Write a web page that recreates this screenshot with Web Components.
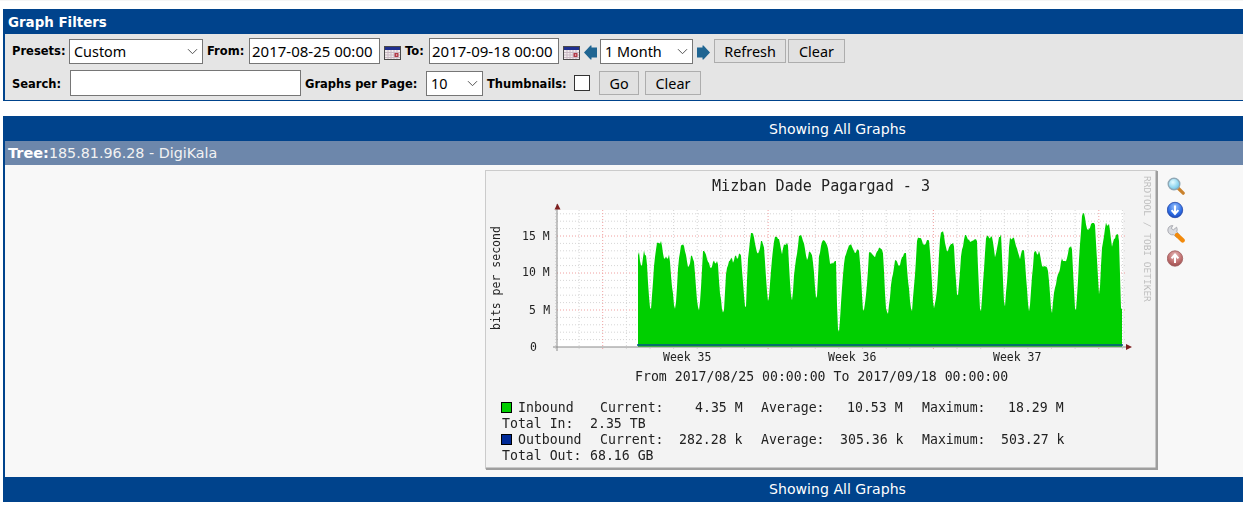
<!DOCTYPE html>
<html>
<head>
<meta charset="utf-8">
<title>Graphs</title>
<style>
  html, body { margin: 0; background: #fff; }
  #top-line { height: 1px; background: #f5f5f5; }
  #page { width: 1240px; margin: 8px 0 0 3px; display: flex; flex-direction: column; gap: 15px; }
  #graphs { background: #00438c; }
</style>
</head>
<body>
<div id="top-line"></div>
<div id="page">
  <filter-panel heading="Graph Filters">
    <filter-row>
      <filter-label style="width:57px">Presets:</filter-label>
      <filter-select value="Custom" width="134"></filter-select>
      <filter-label style="margin-left:4px;width:42px">From:</filter-label>
      <filter-input value="2017-08-25 00:00" width="131"></filter-input>
      <cal-icon style="margin-left:4px"></cal-icon>
      <filter-label style="margin-left:4px;width:24px">To:</filter-label>
      <filter-input value="2017-09-18 00:00" width="130"></filter-input>
      <cal-icon style="margin-left:4px"></cal-icon>
      <step-arrow dir="left" style="margin-left:4px"></step-arrow>
      <filter-select value="1 Month" width="93" style="margin-left:3px"></filter-select>
      <step-arrow dir="right" style="margin-left:4px"></step-arrow>
      <filter-button width="72" style="margin-left:4px">Refresh</filter-button>
      <filter-button width="57" style="margin-left:2px">Clear</filter-button>
    </filter-row>
    <filter-row style="margin-top:6px">
      <filter-label style="width:58px;margin-top:2px">Search:</filter-label>
      <filter-input width="231" height="26"></filter-input>
      <filter-label style="margin-left:4px;width:121px;margin-top:2px">Graphs per Page:</filter-label>
      <filter-select value="10" width="57"></filter-select>
      <filter-label style="margin-left:4px;width:87px;margin-top:2px">Thumbnails:</filter-label>
      <filter-check></filter-check>
      <filter-button width="40" style="margin-left:9px">Go</filter-button>
      <filter-button width="56" style="margin-left:6px">Clear</filter-button>
    </filter-row>
  </filter-panel>

  <div id="graphs">
    <blue-bar>Showing All Graphs</blue-bar>
    <tree-row label="Tree:">185.81.96.28 - DigiKala</tree-row>
    <graph-cell>
      <rrd-graph></rrd-graph>
      <graph-actions></graph-actions>
    </graph-cell>
    <blue-bar style="line-height:25px">Showing All Graphs</blue-bar>
  </div>
</div>

<script>
// Filter box at the top
class FilterPanel extends HTMLElement {
  constructor() {
    super();
    const shadow = this.attachShadow({ mode: "open" });
    shadow.innerHTML = `
      <style>
        :host { display: block; background: #00438c; padding-bottom: 1px; }
        h2 {
          margin: 0; height: 25px; padding-left: 5px;
          font: bold 13.4px/28px "DejaVu Sans", sans-serif; color: #fff;
        }
        #body {
          margin-left: 2px; height: 62px; padding: 4px 0 0 7px;
          background: #e5e5e5; display: flex; flex-direction: column;
        }
      </style>
      <h2>${this.getAttribute("heading")}</h2>
      <div id="body"><slot></slot></div>
    `;
  }
}

class FilterRow extends HTMLElement {
  constructor() {
    super();
    this.attachShadow({ mode: "open" }).innerHTML = `
      <style>:host { display: flex; align-items: center; height: 26px; }</style>
      <slot></slot>
    `;
  }
}

class FilterLabel extends HTMLElement {
  constructor() {
    super();
    this.attachShadow({ mode: "open" }).innerHTML = `
      <style>
        :host {
          display: block; flex: none; white-space: nowrap;
          font: bold 11.5px "DejaVu Sans", sans-serif; color: #000;
        }
      </style>
      <slot></slot>
    `;
  }
}

class FilterInput extends HTMLElement {
  constructor() {
    super();
    const w = this.getAttribute("width");
    const h = this.getAttribute("height") || 26;
    this.attachShadow({ mode: "open" }).innerHTML = `
      <style>
        :host { display: block; flex: none; }
        input {
          display: block; box-sizing: border-box; width: ${w}px; height: ${h}px;
          margin: 0; padding: 0 2px; border: 1px solid #767676; border-radius: 0;
          background: #fff; outline: none;
          font: 15px "Noto Sans", sans-serif; color: #000;
        }
      </style>
      <input type="text" value="${this.getAttribute("value") || ""}">
    `;
  }
}

class FilterSelect extends HTMLElement {
  constructor() {
    super();
    const w = this.getAttribute("width");
    const value = this.getAttribute("value");
    this.attachShadow({ mode: "open" }).innerHTML = `
      <style>
        :host { display: block; flex: none; position: relative; width: ${w}px; height: 25px; }
        select {
          display: block; box-sizing: border-box; width: 100%; height: 100%;
          margin: 0; padding: 0 0 0 4px; appearance: none; border: 1px solid #767676;
          border-radius: 0; background: #fff; outline: none;
          font: 14.4px "Noto Sans", sans-serif; color: #000;
        }
        svg { position: absolute; right: 5px; top: 9px; pointer-events: none; }
      </style>
      <select><option>${value}</option></select>
      <svg width="11" height="7" viewBox="0 0 11 7"><path d="M1 1.2 5.5 5.7 10 1.2" fill="none" stroke="#555" stroke-width="1"/></svg>
    `;
  }
}

class FilterButton extends HTMLElement {
  constructor() {
    super();
    const w = this.getAttribute("width");
    this.attachShadow({ mode: "open" }).innerHTML = `
      <style>
        :host { display: block; flex: none; }
        button {
          display: block; box-sizing: border-box; width: ${w}px; height: 24px;
          margin: 0; padding: 0; border: 1px solid #adadad; border-radius: 0;
          background: #e1e1e1; font: 14.4px "Noto Sans", sans-serif; color: #000;
        }
      </style>
      <button><slot></slot></button>
    `;
  }
}

class FilterCheck extends HTMLElement {
  constructor() {
    super();
    this.attachShadow({ mode: "open" }).innerHTML = `
      <style>
        :host { display: block; flex: none; }
        input {
          display: block; appearance: none; box-sizing: border-box; width: 16px; height: 16px;
          margin: 0; border: 1px solid #333; background: #fff; border-radius: 0;
        }
      </style>
      <input type="checkbox">
    `;
  }
}

class CalIcon extends HTMLElement {
  constructor() {
    super();
    this.attachShadow({ mode: "open" }).innerHTML = `
      <style>:host { display: block; flex: none; height: 14px; margin-top: 4px; } svg { display: block; }</style>
      <svg width="17" height="14" viewBox="0 0 17 14">
        <rect x=".5" y=".5" width="16" height="13" fill="#f1ecec" stroke="#4a4a4a"/>
        <rect x="1" y="1" width="15" height="3" fill="#1f2f8f"/>
        <path d="M1 6.5H16M1 9H16M1 11.5H16M4 4V13M7 4V13M10 4V13M13 4V13" stroke="#c9b9c4" stroke-width="1" fill="none"/>
        <rect x="10.5" y="7" width="4" height="4" fill="#b23a48"/>
        <rect x="12" y="8.4" width="1.2" height="1.2" fill="#f4d9d9"/>
      </svg>
    `;
  }
}

class StepArrow extends HTMLElement {
  constructor() {
    super();
    const flip = this.getAttribute("dir") === "right" ? ' transform="matrix(-1 0 0 1 13 0)"' : "";
    this.attachShadow({ mode: "open" }).innerHTML = `
      <style>:host { display: block; flex: none; height: 15px; margin-top: 2px; } svg { display: block; }</style>
      <svg width="13" height="15" viewBox="0 0 13 15">
        <path d="M0 7.5 6.5 .5 7.5 .5V2.5H13V12.5H7.5V14.5H6.5Z" fill="#1f6592"${flip}/>
      </svg>
    `;
  }
}

class BlueBar extends HTMLElement {
  constructor() {
    super();
    this.attachShadow({ mode: "open" }).innerHTML = `
      <style>
        :host {
          display: block; height: 25px; box-sizing: border-box; padding-left: 429px;
          background: #00438c; color: #fff; text-align: center;
          font: 14.1px/26px "DejaVu Sans", sans-serif;
        }
      </style>
      <slot></slot>
    `;
  }
}

class TreeRow extends HTMLElement {
  constructor() {
    super();
    this.attachShadow({ mode: "open" }).innerHTML = `
      <style>
        :host {
          display: block; height: 24px; margin-left: 2px; padding-left: 3px;
          background: #6d87ab; color: #f2f2f2;
          font: 14.3px/25px "DejaVu Sans", sans-serif;
        }
        b { color: #fff; font-size: 14.5px; }
      </style>
      <b>${this.getAttribute("label")}</b><slot></slot>
    `;
  }
}

class GraphCell extends HTMLElement {
  constructor() {
    super();
    this.attachShadow({ mode: "open" }).innerHTML = `
      <style>
        :host {
          display: flex; align-items: flex-start;
          margin-left: 2px; height: 312px; box-sizing: border-box; padding: 5px 0 0 480px;
          background: #f8f8f8;
        }
      </style>
      <slot></slot>
    `;
  }
}

class GraphActions extends HTMLElement {
  constructor() {
    super();
    this.attachShadow({ mode: "open" }).innerHTML = `
      <style>
        :host { display: flex; flex-direction: column; gap: 6px; width: 24px; padding: 7px 0 0 9px; }
        svg { display: block; }
      </style>
      <svg width="18" height="18" viewBox="0 0 18 18">
        <defs><radialGradient id="lens" cx=".4" cy=".35" r=".7"><stop offset="0" stop-color="#e6fbff"/><stop offset="1" stop-color="#62c2e8"/></radialGradient></defs>
        <path d="M11 11 16.2 16.2" stroke="#c9822e" stroke-width="3.2" stroke-linecap="round"/>
        <circle cx="7" cy="7" r="5.8" fill="url(#lens)" stroke="#8fa7b5" stroke-width="1.4"/>
      </svg>
      <svg width="18" height="18" viewBox="0 0 18 18">
        <defs><radialGradient id="blue" cx=".5" cy=".3" r=".75"><stop offset="0" stop-color="#9cc4fb"/><stop offset=".6" stop-color="#2f6fe6"/><stop offset="1" stop-color="#1842b4"/></radialGradient></defs>
        <circle cx="8" cy="9" r="7.7" fill="url(#blue)" stroke="#2346a6" stroke-width=".8"/>
        <path d="M8 4.5V12.5M4.6 9.2 8 13 11.4 9.2" fill="none" stroke="#fff" stroke-width="2"/>
      </svg>
      <svg width="18" height="18" viewBox="0 0 18 18">
        <path d="M5.8 .6A5 5 0 0 0 .8 5 4.8 4.8 0 0 0 6.6 9.8L9.6 12.4 12.2 9.8 9.8 6.6A5 5 0 0 0 9.6 2.2L6.4 4.8 4.2 3.4Z" fill="#d9dbe0" stroke="#9a9ca3" stroke-width=".8"/>
        <path d="M10 10 15.6 15.4" stroke="#f28a0c" stroke-width="4.4" stroke-linecap="round"/>
      </svg>
      <svg width="18" height="18" viewBox="0 0 18 18">
        <defs><radialGradient id="red" cx=".5" cy=".3" r=".75"><stop offset="0" stop-color="#e6bcbc"/><stop offset=".6" stop-color="#bf6e6e"/><stop offset="1" stop-color="#964a4a"/></radialGradient></defs>
        <circle cx="8" cy="9.5" r="7.7" fill="url(#red)" stroke="#a06060" stroke-width=".8"/>
        <path d="M8 14V6M4.6 9.3 8 5.5 11.4 9.3" fill="none" stroke="#fff" stroke-width="2"/>
      </svg>
    `;
  }
}

// Traffic outline read off the picture, two stretches with their own offsets
const STRETCH_A = [470,546, 472,245, 478,300, 490,300, 496,258, 500,340, 508,440, 514,455, 520,385, 526,290, 534,230, 540,235, 552,295, 565,270, 572,355, 580,430, 585,455, 592,400, 598,290, 606,243, 614,258, 622,320, 638,275, 645,370, 652,435, 658,452, 664,405, 672,262, 680,280, 690,320, 710,285, 716,370, 722,430, 728,452, 735,435, 742,310, 752,282, 760,305, 768,275, 780,270, 788,390, 795,440, 800,452, 806,290, 815,205, 822,232, 832,280, 848,230, 855,340, 865,440, 870,400, 878,290, 888,212, 895,225, 905,285, 920,225, 930,400, 938,440, 945,330, 960,213, 970,240, 978,290, 992,260, 1000,340, 1010,445, 1015,380];
const STRETCH_B = [0,270, 12,227, 20,240, 30,315, 45,290, 50,490, 60,515, 68,380, 78,270, 90,240, 100,268, 115,252, 125,435, 132,452, 140,405, 150,265, 165,285, 175,250, 185,255, 195,430, 205,465, 215,375, 228,285, 238,315, 255,265, 268,425, 278,452, 285,370, 295,212, 310,250, 325,222, 335,400, 342,452, 352,395, 365,198, 380,265, 398,235, 405,340, 412,455, 425,290, 437,208, 450,240, 468,222, 476,430, 485,452, 495,320, 500,212, 515,225, 525,295, 540,215, 550,430, 556,452, 565,330, 572,222, 582,225, 600,295, 610,255, 622,430, 628,458, 635,400, 645,260, 655,262, 665,315, 680,300, 690,430, 697,465, 708,360, 730,285, 740,292, 752,240, 762,430, 770,452, 780,290, 790,137, 800,205, 822,175, 830,320, 838,452, 850,240, 862,168, 875,260, 893,198, 900,430, 908,435];

function outline() {
  // to image coordinates
  const pts = [];
  for (let i = 2; i < STRETCH_A.length; i += 2) pts.push([STRETCH_A[i] / 3 - 5, STRETCH_A[i + 1] / 3 - 5]);
  for (let i = 0; i < STRETCH_B.length; i += 2) pts.push([STRETCH_B[i] / 3 + 335, STRETCH_B[i + 1] / 3 - 5]);

  // one sample per pixel
  const first = Math.ceil(pts[0][0]);
  const last = Math.floor(pts[pts.length - 1][0]);
  const ys = [];
  let k = 0;
  for (let x = first; x <= last; x++) {
    while (k < pts.length - 2 && pts[k + 1][0] < x) k++;
    const [x0, y0] = pts[k];
    const [x1, y1] = pts[k + 1];
    ys.push(y0 + (y1 - y0) * (x - x0) / (x1 - x0 || 1));
  }

  // widen the humps a little and roughen them, the traffic is never smooth
  const out = [`${first},177`];
  ys.forEach((y, i) => {
    const top = Math.min(y, ys[i - 1] ?? y, ys[i + 1] ?? y);
    const x = first + i;
    const step = x - (x % 2);
    const rough = top < 135 ? Math.sin(step * 1.7) * 1.6 + Math.sin(step * 0.63) * 1.4 : 0;
    out.push(`${x},${(top + rough).toFixed(1)}`);
  });
  out.push(`${last},177`);
  return out.join(" ");
}

function gridLines() {
  let out = "";
  // all numbers below are inside the 673x300 image
  for (let m = 1; m <= 18; m++) {
    const y = 177 - m * 7.4;
    const major = m % 5 === 0;
    out += `<path d="M72 ${y.toFixed(1)}H640" stroke="${major ? "#f0a0a0" : "#d6d6d6"}" stroke-width="1" stroke-dasharray="1 2"/>`;
  }
  for (let i = 0; i < 25; i++) {
    const x = 70.5 + i * 23.62;
    const major = (i - 2) % 7 === 0 && i >= 2;
    out += `<path d="M${x.toFixed(1)} 40V181" stroke="${major ? "#f0a0a0" : "#d6d6d6"}" stroke-width="1" stroke-dasharray="1 2"/>`;
  }
  return out;
}

class RrdGraph extends HTMLElement {
  constructor() {
    super();
    const t = (x, y, s, extra = "") => `<text x="${x}" y="${y}" ${extra}>${s}</text>`;
    this.attachShadow({ mode: "open" }).innerHTML = `
      <style>
        :host { display: block; flex: none; width: 673px; height: 300px; }
        svg { display: block; filter: blur(.3px); }
        text { font-family: "DejaVu Sans Mono", monospace; fill: #222; white-space: pre; }
        .title { font-size: 15.1px; }
        .axis { font-size: 11.5px; }
        .legend { font-size: 13.2px; }
        .brand { font-size: 9.5px; fill: #bdbdbd; }
      </style>
      <svg width="673" height="300" viewBox="0 0 673 300">
        <rect width="673" height="300" fill="#f3f3f3"/>
        <path d="M0 299V0H672" fill="none" stroke="#cbcbcb" stroke-width="2"/>
        <path d="M1 299H672V1" fill="none" stroke="#9e9e9e" stroke-width="3"/>
        <rect x="72" y="40" width="566" height="137" fill="#fff"/>
        ${gridLines()}
        <polygon points="${outline()}" fill="#00cf00"/>
        <path d="M152 175H638" stroke="#0a4f8c" stroke-width="1.4" fill="none"/>
        <path d="M72 34V181M68 177H642" stroke="#8a8a8a" stroke-width="1" fill="none"/>
        <path d="M69.5 39.5 72.5 33.5 75.5 39.5Z" fill="#7f1f1f"/>
        <path d="M641 174 647 177 641 180Z" fill="#7f1f1f"/>
        ${t(227, 21, "Mizban Dade Pagargad - 3", 'class="title"')}
        ${t(0, 0, "bits per second", 'class="axis" transform="translate(14.5 160) rotate(-90)"')}
        ${t(0, 0, "RRDTOOL / TOBI OETIKER", 'class="brand" transform="translate(659 6) rotate(90)"')}
        ${t(37, 70, "15 M", 'class="axis"')}
        ${t(37, 106, "10 M", 'class="axis"')}
        ${t(44, 144, "5 M", 'class="axis" style="letter-spacing:.2px"')}
        ${t(45, 181, "0", 'class="axis"')}
        ${t(178, 191, "Week 35", 'class="axis"')}
        ${t(343, 191, "Week 36", 'class="axis"')}
        ${t(508, 191, "Week 37", 'class="axis"')}
        ${t(150, 211, "From 2017/08/25 00:00:00 To 2017/09/18 00:00:00", 'class="legend"')}

        <rect x="16.5" y="232.5" width="10" height="10" fill="#00cf00" stroke="#000"/>
        ${t(33, 242, "Inbound", 'class="legend"')}
        ${t(115, 242, "Current:", 'class="legend"')}
        ${t(210, 242, "4.35 M", 'class="legend"')}
        ${t(276, 242, "Average:", 'class="legend"')}
        ${t(362, 242, "10.53 M", 'class="legend"')}
        ${t(437, 242, "Maximum:", 'class="legend"')}
        ${t(523, 242, "18.29 M", 'class="legend"')}
        ${t(17, 258, "Total In:", 'class="legend"')}
        ${t(105, 258, "2.35 TB", 'class="legend"')}

        <rect x="16.5" y="264.5" width="10" height="10" fill="#002a97" stroke="#000"/>
        ${t(33, 274, "Outbound", 'class="legend"')}
        ${t(115, 274, "Current:", 'class="legend"')}
        ${t(194, 274, "282.28 k", 'class="legend"')}
        ${t(276, 274, "Average:", 'class="legend"')}
        ${t(355, 274, "305.36 k", 'class="legend"')}
        ${t(437, 274, "Maximum:", 'class="legend"')}
        ${t(516, 274, "503.27 k", 'class="legend"')}
        ${t(17, 290, "Total Out:", 'class="legend"')}
        ${t(105, 290, "68.16 GB", 'class="legend"')}
      </svg>
    `;
  }
}

customElements.define("filter-panel", FilterPanel);
customElements.define("filter-row", FilterRow);
customElements.define("filter-label", FilterLabel);
customElements.define("filter-input", FilterInput);
customElements.define("filter-select", FilterSelect);
customElements.define("filter-button", FilterButton);
customElements.define("filter-check", FilterCheck);
customElements.define("cal-icon", CalIcon);
customElements.define("step-arrow", StepArrow);
customElements.define("blue-bar", BlueBar);
customElements.define("tree-row", TreeRow);
customElements.define("graph-cell", GraphCell);
customElements.define("graph-actions", GraphActions);
customElements.define("rrd-graph", RrdGraph);
</script>
</body>
</html>
